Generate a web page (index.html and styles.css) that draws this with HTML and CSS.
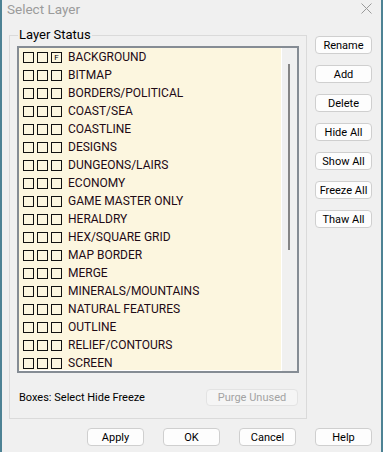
FILE: index.html
```html
<!DOCTYPE html>
<html lang="en">
<head>
    <meta charset="UTF-8">
    <title>Select Layer</title>
    <link rel="stylesheet" href="styles.css">
</head>
<body>
    <div class="dialog">
        <div class="titlebar">
            <span class="title">Select Layer</span>
            <svg class="close" width="11" height="11" viewBox="0 0 11 11">
                <path d="M0.5 0.5 L10.5 10.5 M10.5 0.5 L0.5 10.5" stroke="#9a9a9a" stroke-width="1" fill="none"/>
            </svg>
        </div>

        <div class="main">
            <div class="group">
                <span class="legend">Layer Status</span>
                <div class="listbox">
                    <div class="rows">
                        <div class="row"><span class="box"></span><span class="box"></span><span class="box flag">F</span><span class="name">BACKGROUND</span></div>
                        <div class="row"><span class="box"></span><span class="box"></span><span class="box"></span><span class="name">BITMAP</span></div>
                        <div class="row"><span class="box"></span><span class="box"></span><span class="box"></span><span class="name">BORDERS/POLITICAL</span></div>
                        <div class="row"><span class="box"></span><span class="box"></span><span class="box"></span><span class="name">COAST/SEA</span></div>
                        <div class="row"><span class="box"></span><span class="box"></span><span class="box"></span><span class="name">COASTLINE</span></div>
                        <div class="row"><span class="box"></span><span class="box"></span><span class="box"></span><span class="name">DESIGNS</span></div>
                        <div class="row"><span class="box"></span><span class="box"></span><span class="box"></span><span class="name">DUNGEONS/LAIRS</span></div>
                        <div class="row"><span class="box"></span><span class="box"></span><span class="box"></span><span class="name">ECONOMY</span></div>
                        <div class="row"><span class="box"></span><span class="box"></span><span class="box"></span><span class="name">GAME MASTER ONLY</span></div>
                        <div class="row"><span class="box"></span><span class="box"></span><span class="box"></span><span class="name">HERALDRY</span></div>
                        <div class="row"><span class="box"></span><span class="box"></span><span class="box"></span><span class="name">HEX/SQUARE GRID</span></div>
                        <div class="row"><span class="box"></span><span class="box"></span><span class="box"></span><span class="name">MAP BORDER</span></div>
                        <div class="row"><span class="box"></span><span class="box"></span><span class="box"></span><span class="name">MERGE</span></div>
                        <div class="row"><span class="box"></span><span class="box"></span><span class="box"></span><span class="name">MINERALS/MOUNTAINS</span></div>
                        <div class="row"><span class="box"></span><span class="box"></span><span class="box"></span><span class="name">NATURAL FEATURES</span></div>
                        <div class="row"><span class="box"></span><span class="box"></span><span class="box"></span><span class="name">OUTLINE</span></div>
                        <div class="row"><span class="box"></span><span class="box"></span><span class="box"></span><span class="name">RELIEF/CONTOURS</span></div>
                        <div class="row"><span class="box"></span><span class="box"></span><span class="box"></span><span class="name">SCREEN</span></div>
                    </div>
                    <div class="scroll"><div class="thumb"></div></div>
                </div>
                <div class="group-foot">
                    <span class="hint">Boxes: Select Hide Freeze</span>
                    <button class="btn purge" disabled>Purge Unused</button>
                </div>
            </div>

            <div class="side">
                <button class="btn">Rename</button>
                <button class="btn">Add</button>
                <button class="btn">Delete</button>
                <button class="btn">Hide All</button>
                <button class="btn">Show All</button>
                <button class="btn">Freeze All</button>
                <button class="btn">Thaw All</button>
            </div>
        </div>

        <div class="actions">
            <button class="btn">Apply</button>
            <button class="btn">OK</button>
            <button class="btn">Cancel</button>
            <button class="btn">Help</button>
        </div>
    </div>
</body>
</html>
```

FILE: styles.css
```css
body {
    margin: 0;
    padding: 0;
    background: #4d8294;
    font-family: Roboto, 'Liberation Sans', sans-serif;
    font-size: 12px;
    color: #000;
}

.dialog {
    box-sizing: border-box;
    width: 379px;
    height: 452px;
    margin-left: 2px;
    background: #f0f0f0;
    display: flex;
    flex-direction: column;
}

/* Title bar */
.titlebar {
    height: 19px;
    display: flex;
    align-items: center;
    justify-content: space-between;
    padding: 0 9px 0 5px;
}

.title {
    color: #9b9b9b;
    font-size: 13.5px;
    line-height: 19px;
}

.close {
    display: block;
    margin-top: -3px;
}

/* Main area */
.main {
    display: flex;
    padding: 0 9px 0 7px;
}

.group {
    position: relative;
    box-sizing: border-box;
    width: 298px;
    height: 384px;
    margin-top: 16px;
    border: 1px solid #dadada;
    padding: 10px 7px 0 7px;
}

.legend {
    position: absolute;
    left: 8px;
    top: -9px;
    padding: 0 1px;
    font-size: 13px;
    line-height: 15px;
    background: #f0f0f0;
}

.listbox {
    box-sizing: border-box;
    width: 282px;
    height: 327px;
    border: 2px solid #858c94;
    background: #fff;
    display: flex;
    overflow: hidden;
}

.rows {
    flex: 1;
    background: #fcf6df;
    margin-right: 1px;
    margin-bottom: 1px;
}

.row {
    height: 18px;
    display: flex;
    align-items: center;
    padding-left: 4px;
}

.box {
    box-sizing: border-box;
    width: 11px;
    height: 11px;
    border: 1px solid #111;
    margin-right: 3px;
}

.box.flag {
    font-size: 8px;
    line-height: 9px;
    text-align: center;
}

.name {
    margin-left: 3px;
    color: #1e0a16;
    font-size: 12px;
}

.scroll {
    width: 15px;
    background: #f0f0f0;
}

.thumb {
    width: 2px;
    height: 186px;
    margin: 16px 0 0 6px;
    background: #858585;
}

.group-foot {
    display: flex;
    align-items: center;
    justify-content: space-between;
    margin-top: 16px;
    padding: 0 1px 0 2px;
}

.hint {
    font-size: 11px;
}

/* Buttons */
.btn {
    box-sizing: border-box;
    width: 57px;
    height: 18px;
    padding: 0;
    font-family: Roboto, 'Liberation Sans', sans-serif;
    font-size: 11px;
    color: #000;
    background: #fdfdfd;
    border: 1px solid #cfcfcf;
    border-radius: 4px;
}

.btn.purge {
    width: 92px;
    height: 17px;
    color: #a3a3a3;
    background: #f5f5f5;
    border-color: #e3e3e3;
}

.side {
    display: flex;
    flex-direction: column;
    gap: 11px;
    margin-left: 8px;
    margin-top: 17px;
}

.actions {
    display: flex;
    justify-content: flex-end;
    gap: 19px;
    padding: 0 9px 0 0;
    margin-top: 9px;
}
```
